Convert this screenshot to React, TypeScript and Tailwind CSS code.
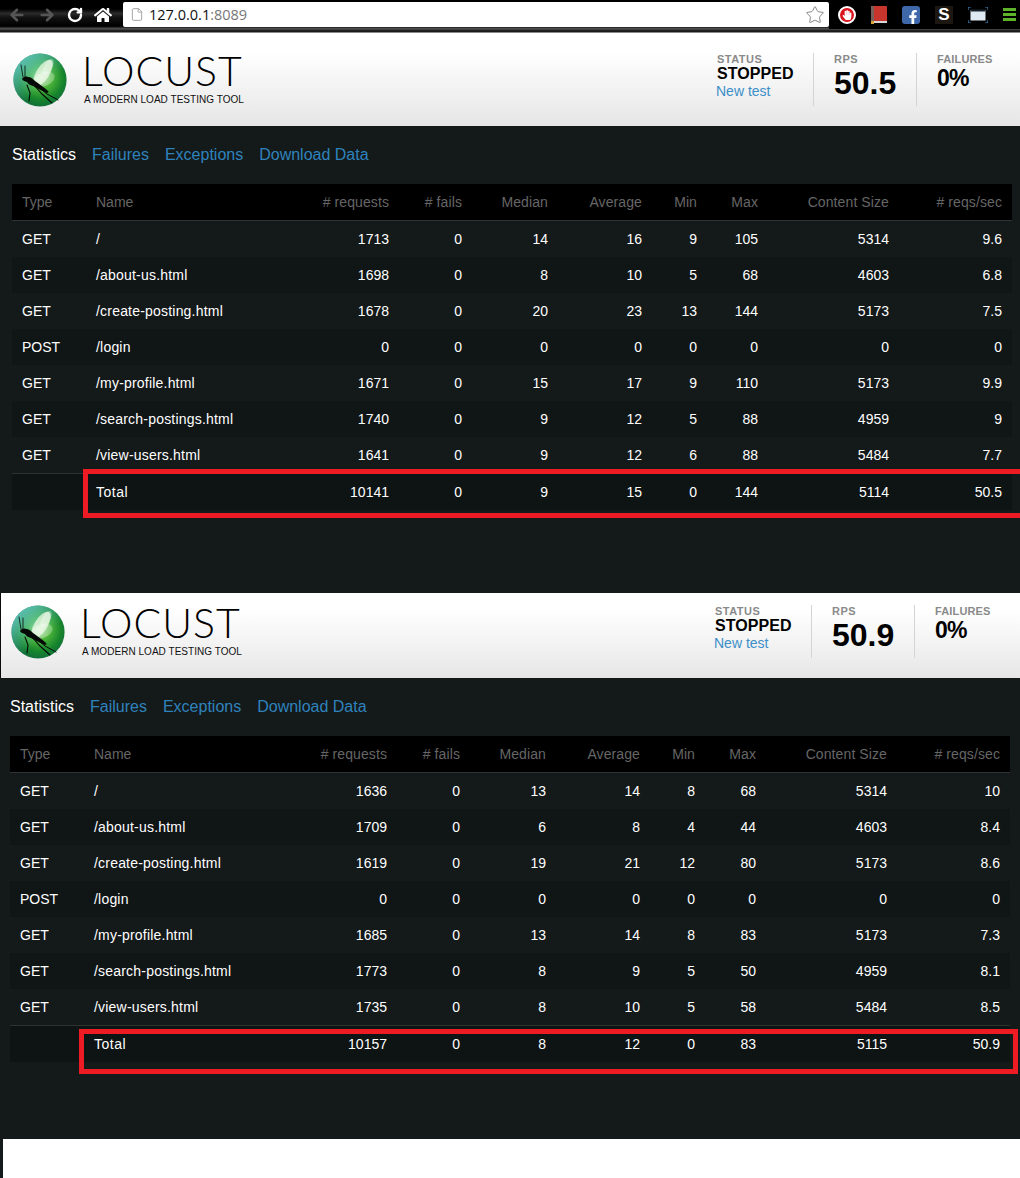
import { useId } from "react"
import { ArrowLeft, ArrowRight, File, RotateCw, Star } from "lucide-react"
import { FaFacebookF, FaHandPaper, FaHome } from "react-icons/fa"

const arial = "font-['Liberation_Sans',Arial,sans-serif]"

type Row = [string, string, number, number, number, number, number, number, number, number | string]

const firstRows: Row[] = [
  ["GET", "/", 1713, 0, 14, 16, 9, 105, 5314, 9.6],
  ["GET", "/about-us.html", 1698, 0, 8, 10, 5, 68, 4603, 6.8],
  ["GET", "/create-posting.html", 1678, 0, 20, 23, 13, 144, 5173, 7.5],
  ["POST", "/login", 0, 0, 0, 0, 0, 0, 0, 0],
  ["GET", "/my-profile.html", 1671, 0, 15, 17, 9, 110, 5173, 9.9],
  ["GET", "/search-postings.html", 1740, 0, 9, 12, 5, 88, 4959, 9],
  ["GET", "/view-users.html", 1641, 0, 9, 12, 6, 88, 5484, 7.7],
]

const secondRows: Row[] = [
  ["GET", "/", 1636, 0, 13, 14, 8, 68, 5314, 10],
  ["GET", "/about-us.html", 1709, 0, 6, 8, 4, 44, 4603, 8.4],
  ["GET", "/create-posting.html", 1619, 0, 19, 21, 12, 80, 5173, 8.6],
  ["POST", "/login", 0, 0, 0, 0, 0, 0, 0, 0],
  ["GET", "/my-profile.html", 1685, 0, 13, 14, 8, 83, 5173, 7.3],
  ["GET", "/search-postings.html", 1773, 0, 8, 9, 5, 50, 4959, 8.1],
  ["GET", "/view-users.html", 1735, 0, 8, 10, 5, 58, 5484, 8.5],
]

const headings = ["# requests", "# fails", "Median", "Average", "Min", "Max", "Content Size", "# reqs/sec"]

function LocustLogo() {
  const id = useId()
  return (
    <svg viewBox="0 0 54 54" className="h-[54px] w-[54px] shrink-0">
      <defs>
        <radialGradient id={`${id}ball`} cx="0.52" cy="0.45" r="0.58">
          <stop offset="0" stopColor="#b7e8a8" />
          <stop offset="0.35" stopColor="#4db53a" />
          <stop offset="0.72" stopColor="#17852c" />
          <stop offset="1" stopColor="#0f6a3c" />
        </radialGradient>
        <linearGradient id={`${id}top`} x1="0.1" y1="0" x2="0.6" y2="0.6">
          <stop offset="0" stopColor="#6fd0d6" stopOpacity="0.95" />
          <stop offset="1" stopColor="#6fd0d6" stopOpacity="0" />
        </linearGradient>
      </defs>
      <circle cx="27" cy="27" r="26.6" fill={`url(#${id}ball)`} />
      <circle cx="27" cy="27" r="26.6" fill={`url(#${id}top)`} />
      <ellipse cx="30" cy="20" rx="6.5" ry="15" transform="rotate(32 30 20)" fill="#f2fbe8" opacity="0.72" />
      <ellipse cx="35" cy="14" rx="4" ry="9" transform="rotate(30 35 14)" fill="#ffffff" opacity="0.35" />
      <ellipse cx="31" cy="26" rx="11" ry="7" transform="rotate(-20 31 26)" fill="#ffffff" opacity="0.3" />
      <g fill="none" stroke="#050a06" strokeLinecap="round">
        <path d="M10 24 8 12M12 24 12 13" strokeWidth="0.8" />
        <path d="M14 32 17 40 16 48" strokeWidth="1.1" />
        <path d="M21 32 29 41 39 50" strokeWidth="1.1" />
        <path d="M24 33 34 41 45 47" strokeWidth="1" />
      </g>
      <path d="M9 26c1-2 4-3 6-2 3 0 5 2 7 4 4 3 9 6 13 10 1 1 0 2-1 2-5-2-10-5-14-7-3-1-5-2-6-4-2-1-4-1-5-3Z" fill="#050a06" />
    </svg>
  )
}

function Header({ compact, rps, left }: { compact?: boolean; rps: string; left: string }) {
  return (
    <header
      className={`flex w-full items-start bg-gradient-to-b from-white from-20% to-[#e6e6e6] ${left} ${
        compact ? "h-[85px] pt-[12px] pr-[2px]" : "h-[93px] pt-[20px]"
      }`}
    >
      <LocustLogo />
      <div className="ml-[15px] flex flex-col">
        <span className="-mt-[3px] font-['Lato',sans-serif] text-[41px] leading-[42px] font-light tracking-[1px] text-black">
          LOCUST
        </span>
        <span className={`${arial} mt-[2px] ml-[2px] text-[10px] leading-[12px] tracking-[0.04px] text-[#111]`}>
          A MODERN LOAD TESTING TOOL
        </span>
      </div>
      <div className={`${arial} ml-auto flex`}>
        <div className="flex w-[96px] flex-col">
          <span className="mt-[1px] text-[11px] leading-[11px] font-bold tracking-[0.5px] text-[#8a8a8a]">STATUS</span>
          <span className="text-[16px] leading-[17px] font-bold tracking-[0.05px] text-black">STOPPED</span>
          <a className="mt-[1px] -ml-[1px] text-[14px] leading-[17px] text-[#3c8fc8]">New test</a>
        </div>
        <div className="flex h-[53px] w-[103px] flex-col border-l border-[#d4d4d4] pl-[20px]">
          <span className="mt-[1px] text-[11px] leading-[11px] font-bold tracking-[0.5px] text-[#8a8a8a]">RPS</span>
          <span className="text-[32px] leading-[36px] font-bold text-black">{rps}</span>
        </div>
        <div className="flex h-[53px] w-[104px] flex-col border-l border-[#d4d4d4] pl-[20px]">
          <span className="mt-[1px] text-[11px] leading-[11px] font-bold tracking-[0.15px] text-[#8a8a8a]">FAILURES</span>
          <span className="text-[23px] leading-[26px] font-bold tracking-[-0.8px] text-black">0%</span>
        </div>
      </div>
    </header>
  )
}

function StatsTable({ rows, total }: { rows: Row[]; total: Row }) {
  return (
    <table className={`${arial} w-[1000px] table-fixed border-separate border-spacing-0 text-[14px] text-white`}>
      <colgroup>
        <col className="w-[74px]" />
        <col className="w-[200px]" />
        <col className="w-[113px]" />
        <col className="w-[73px]" />
        <col className="w-[86px]" />
        <col className="w-[94px]" />
        <col className="w-[55px]" />
        <col className="w-[61px]" />
        <col className="w-[131px]" />
        <col className="w-[113px]" />
      </colgroup>
      <thead>
        <tr className="bg-black text-[#666]">
          <th className="h-[37px] border-b border-[#2e3233] px-[10px] text-left font-normal">Type</th>
          <th className="h-[37px] border-b border-[#2e3233] px-[10px] text-left font-normal">Name</th>
          {headings.map((heading) => (
            <th key={heading} className="h-[37px] border-b border-[#2e3233] px-[10px] text-right font-normal tracking-[0.1px] whitespace-nowrap">
              {heading}
            </th>
          ))}
        </tr>
      </thead>
      <tbody>
        {rows.map((row) => (
          <tr key={row[1]} className="even:bg-[#101516]">
            <td className="h-[36px] px-[10px]">{row[0]}</td>
            <td className="h-[36px] px-[10px] tracking-[0.2px]">{row[1]}</td>
            {row.slice(2).map((cell, i) => (
              <td key={i} className="h-[36px] px-[10px] text-right">
                {cell}
              </td>
            ))}
          </tr>
        ))}
        <tr className="bg-[#0e1314]">
          <td className="h-[37px] border-t border-[#2e3233] px-[10px]"></td>
          <td className="h-[37px] border-t border-[#2e3233] px-[10px] tracking-[0.5px]">Total</td>
          {total.slice(2).map((cell, i) => (
            <td key={i} className="h-[37px] border-t border-[#2e3233] px-[10px] text-right">
              {cell}
            </td>
          ))}
        </tr>
      </tbody>
    </table>
  )
}

function Tabs() {
  return (
    <nav className={`${arial} flex h-[58px] items-center gap-[16px] text-[16px] text-[#2f83bd]`}>
      <a className="text-white">Statistics</a>
      <a>Failures</a>
      <a>Exceptions</a>
      <a>Download Data</a>
    </nav>
  )
}

function Toolbar() {
  return (
    <div className="flex h-[33px] items-start border-b border-[#8a8a8a] bg-[linear-gradient(180deg,#000_0%,#000_28%,#2b2b2b_42%,#111_55%,#000_82%,#555_90%,#1a1a1a_96%)]">
      <div className="flex h-[30px] w-[123px] items-center">
        <ArrowLeft className="ml-[8px] h-[18px] w-[18px] text-[#565656]" strokeWidth={3.4} />
        <ArrowRight className="ml-[12px] h-[18px] w-[18px] text-[#565656]" strokeWidth={3.4} />
        <RotateCw className="ml-[11px] h-[16px] w-[16px] text-white" strokeWidth={3.6} />
        <FaHome className="ml-[11px] h-[18px] w-[18px] text-white" />
      </div>
      <div className="mt-[2px] flex h-[25px] w-[706px] items-center rounded-[2px] bg-white pr-[4px] pl-[7px]">
        <File className="h-[15px] w-[14px] text-[#999]" strokeWidth={1.5} />
        <span className="ml-[5px] font-['Open_Sans',sans-serif] text-[14.5px] leading-[25px] text-[#111]">
          127.0.0.1<span className="text-[#777]">:8089</span>
        </span>
        <Star className="ml-auto h-[20px] w-[20px] text-[#888]" strokeWidth={1.2} />
      </div>
      <div className="flex h-[29px] flex-1 items-center justify-between bg-black pr-[4px] pl-[9px]">
        <span className="flex h-[18px] w-[18px] items-center justify-center rounded-full border-2 border-white bg-[#d9141c]">
          <FaHandPaper className="h-[10px] w-[10px] text-white" />
        </span>
        <svg viewBox="0 0 16 18" className="h-[18px] w-[16px]">
          <rect width="16" height="17" rx="1" fill="#c8352c" />
          <rect width="3" height="17" fill="#77605a" />
          <rect x="3" y="15" width="13" height="2" fill="#d7d7d7" />
          <rect y="15" width="3" height="3" fill="#d9a53a" />
        </svg>
        <span className="flex h-[18px] w-[18px] items-end justify-end rounded-[3px] bg-[#3f68ab]">
          <FaFacebookF className="mr-[2px] h-[14px] w-[10px] text-white" />
        </span>
        <span className={`${arial} flex h-[18px] w-[18px] items-center justify-center bg-[#1d1712] text-[17px] leading-none font-bold text-white`}>
          S
        </span>
        <svg viewBox="0 0 20 16" className="h-[16px] w-[20px]">
          <rect x="2.5" y="3" width="15" height="10.5" fill="#dfe9f2" />
          <rect x="2.5" y="2.5" width="15" height="2" fill="#19232e" />
          <path d="M0 3V0h3M17 0h3v3M0 13v3h3M17 16h3v-3" fill="none" stroke="#3a86c0" strokeWidth="1.2" />
        </svg>
        <span className="flex w-[13px] flex-col gap-[2px]">
          <span className="h-[3px] bg-[#5fb32a]" />
          <span className="h-[3px] bg-[#5fb32a]" />
          <span className="h-[3px] bg-[#5fb32a]" />
        </span>
      </div>
    </div>
  )
}

const firstTotal: Row = ["", "Total", 10141, 0, 9, 15, 0, 144, 5114, 50.5]
const secondTotal: Row = ["", "Total", 10157, 0, 8, 12, 0, 83, 5115, 50.9]

export default function App() {
  return (
    <div className="h-[1178px] w-[1020px] overflow-hidden bg-[#14191a]">
      <Toolbar />
      <Header rps="50.5" left="pl-[13px]" />
      <section className="h-[467px] pl-[12px]">
        <Tabs />
        <div className="relative w-[1000px]">
          <StatsTable rows={firstRows} total={firstTotal} />
          <div className="absolute top-[285px] left-[71px] h-[49px] w-[960px] border-[5px] border-[#ed1c24]" />
        </div>
      </section>
      <div className="border-l border-[#0b0b0b]">
        <Header compact rps="50.9" left="pl-[10px]" />
      </div>
      <section className="h-[461px] pl-[10px]">
        <Tabs />
        <div className="relative w-[1000px]">
          <StatsTable rows={secondRows} total={secondTotal} />
          <div className="absolute top-[293px] left-[69px] h-[45px] w-[939px] border-[5px] border-[#ed1c24]" />
        </div>
      </section>
      <div className="ml-[3px] h-[39px] bg-white" />
    </div>
  )
}
